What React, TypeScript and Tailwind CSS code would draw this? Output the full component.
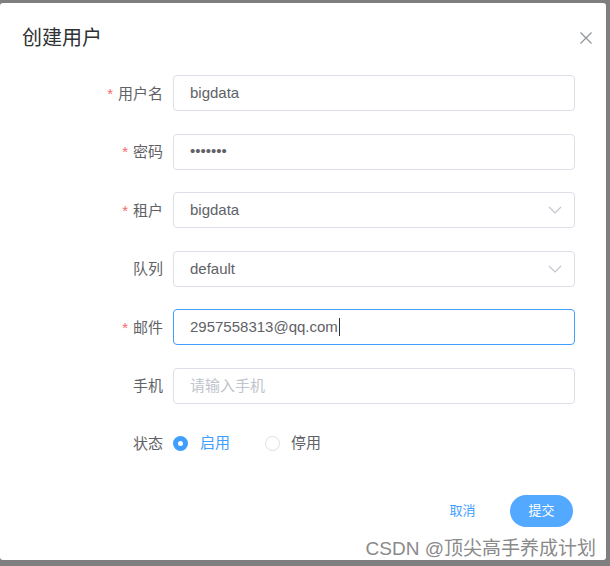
import React from "react";

const font = { fontFamily: '"Liberation Sans", "Noto Sans CJK SC", sans-serif' };

function Label({ text, required }: { text: string; required?: boolean }) {
  return (
    <div className="w-[173px] shrink-0 pr-[10px] text-right text-[15px] text-[#606266] leading-none">
      {required && <span className="mr-[5px] text-[#f56c6c]">*</span>}
      {text}
    </div>
  );
}

function Chevron() {
  return (
    <svg width="14" height="8" viewBox="0 0 14 8" className="shrink-0">
      <path d="M1 1 L7 7 L13 1" fill="none" stroke="#c0c4cc" strokeWidth="1.1" />
    </svg>
  );
}

function Box({ children, focused, select }: { children: React.ReactNode; focused?: boolean; select?: boolean }) {
  return (
    <div
      className={`flex h-[36px] w-[402px] items-center rounded-[4px] border pl-[16px] pr-[12px] text-[15px] text-[#606266] ${
        focused ? "border-[#409eff]" : "border-[#dcdfe6]"
      }`}
    >
      <div className="flex flex-1 items-center">{children}</div>
      {select && <Chevron />}
    </div>
  );
}

export default function App() {
  return (
    <div className="relative h-[566px] w-[610px] overflow-hidden bg-[#7f7f7f] pt-[3px]" style={font}>
      <div className="h-[557px] w-[606px] rounded-[3px] bg-white">
        <div className="flex items-center justify-between pl-[22px] pr-[14px] pt-[23px]">
          <div className="text-[20px] leading-[24px] text-[#303133]">创建用户</div>
          <svg width="12" height="12" viewBox="0 0 12 12" className="-mt-[1px]">
            <path d="M0.5 0.5 L11.5 11.5 M11.5 0.5 L0.5 11.5" stroke="#909399" strokeWidth="1.2" />
          </svg>
        </div>

        <div className="mt-[25px] flex flex-col gap-[22.6px]">
          <div className="flex items-center">
            <Label text="用户名" required />
            <Box>bigdata</Box>
          </div>
          <div className="flex items-center">
            <Label text="密码" required />
            <Box>
              <span>•••••••</span>
            </Box>
          </div>
          <div className="flex items-center">
            <Label text="租户" required />
            <Box select>bigdata</Box>
          </div>
          <div className="flex items-center">
            <Label text="队列" />
            <Box select>default</Box>
          </div>
          <div className="flex items-center">
            <Label text="邮件" required />
            <Box focused>
              <span>2957558313@qq.com</span>
              <span className="ml-[1px] h-[18px] w-[1px] bg-[#303133]" />
            </Box>
          </div>
          <div className="flex items-center">
            <Label text="手机" />
            <Box>
              <span className="text-[#c0c4cc]">请输入手机</span>
            </Box>
          </div>
          <div className="flex h-[33px] items-center">
            <Label text="状态" />
            <div className="flex items-center text-[15px]">
              <span className="flex h-[15px] w-[15px] items-center justify-center rounded-full bg-[#409eff]">
                <span className="h-[5px] w-[5px] rounded-full bg-white" />
              </span>
              <span className="ml-[12px] text-[#409eff]">启用</span>
              <span className="ml-[35px] h-[15px] w-[15px] rounded-full border border-[#dcdfe6] bg-white" />
              <span className="ml-[11px] text-[#606266]">停用</span>
            </div>
          </div>
        </div>

        <div className="mt-[35px] flex items-center justify-end gap-[16px] pr-[33px]">
          <button className="flex h-[32px] w-[63px] items-center justify-center text-[13px] text-[#409eff]">取消</button>
          <button className="flex h-[32px] w-[63px] items-center justify-center rounded-full bg-[#53a8ff] text-[13px] text-white">
            提交
          </button>
        </div>
      </div>

      <div
        className="absolute right-[14px] top-[537px] text-[19px] leading-[23px] text-[#8a8a8a]"
        style={{ textShadow: "0 0 2px #fff, 0 0 1px #fff" }}
      >
        CSDN @顶尖高手养成计划
      </div>
    </div>
  );
}
